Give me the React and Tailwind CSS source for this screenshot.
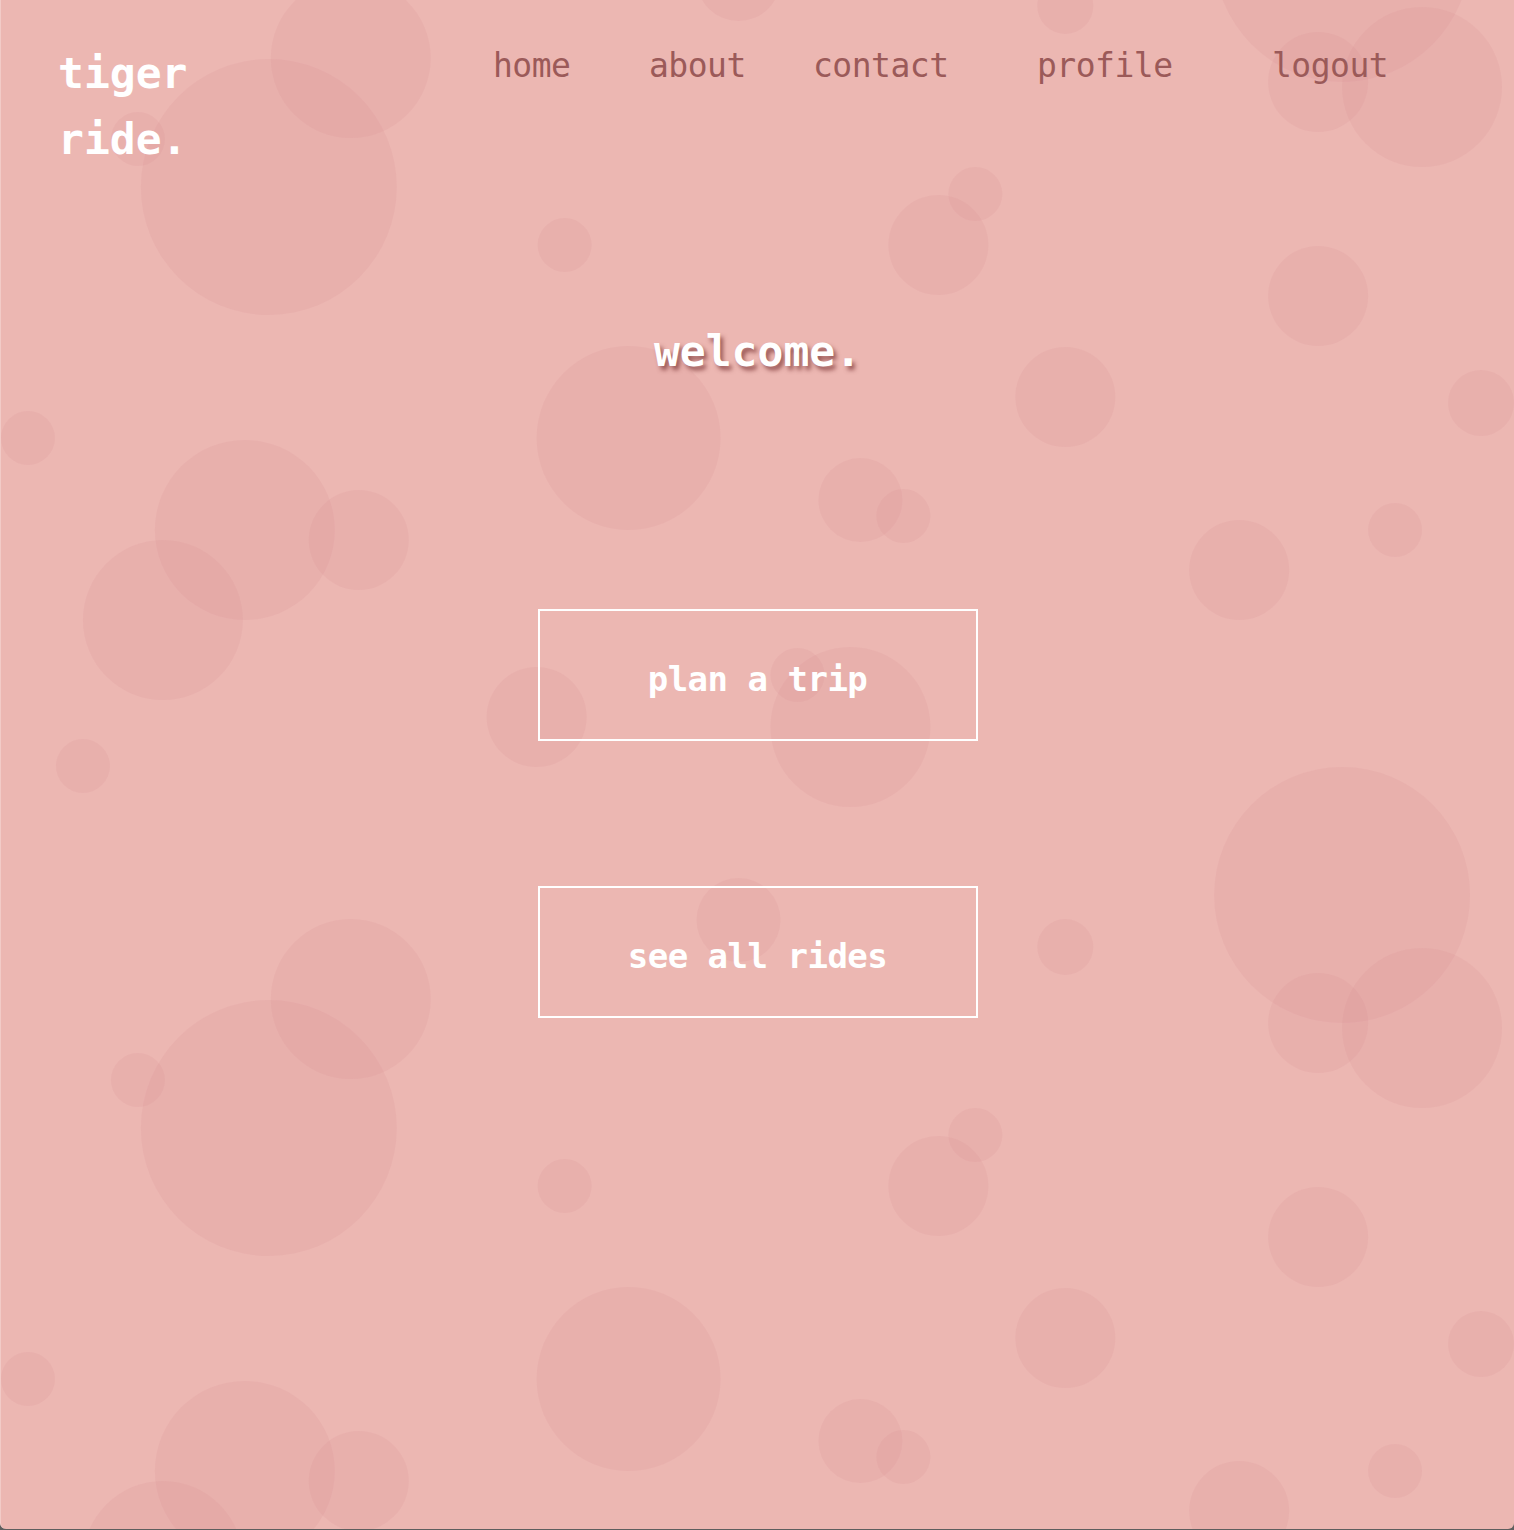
const circles = [
  [268, 187, 128], [350, 58, 80], [738, -21, 42], [1065, 6, 28], [1342, -46, 128],
  [1318, 82, 50], [1422, 87, 80], [975, 194, 27], [938, 245, 50], [564, 245, 27],
  [1318, 296, 50], [628, 438, 92], [1065, 397, 50], [1481, 403, 33], [27, 438, 27],
  [244, 530, 90], [358, 540, 50], [162, 620, 80], [860, 500, 42], [903, 516, 27],
  [1239, 570, 50], [1395, 530, 27], [536, 717, 50], [850, 727, 80], [797, 675, 27],
  [82, 766, 27], [137, 139, 27],
];

const navLinks = [
  { label: 'home', w: 'w-[156px]' },
  { label: 'about', w: 'w-[164px]' },
  { label: 'contact', w: 'w-[224px]' },
  { label: 'profile', w: 'w-[235px]' },
  { label: 'logout', w: 'w-[150px]' },
];

const Bubbles = () => (
  <svg className="absolute inset-0 w-full h-full" viewBox="0 0 1514 1529" preserveAspectRatio="none">
    {[0, 1, 2].map((k) =>
      circles.map(([cx, cy, r], i) => (
        <circle key={`${k}-${i}`} cx={cx} cy={cy + k * 941} r={r} fill="#d4898b" fillOpacity="0.14" />
      ))
    )}
  </svg>
);

const App = () => {
  return (
    <div className="bg-[#5e5e5e] h-[1530px] font-['DejaVu_Sans_Mono',monospace]">
      <div className="relative h-[1529px] overflow-hidden rounded-b-[6px] bg-[#ecb7b2] border-l border-[#f2cbc7]">
        <Bubbles />
        <div className="relative">
          <header className="flex items-start pt-[40px] pl-[57px]">
            <div className="w-[435px] text-white font-bold text-[43px] leading-[66px]">
              tiger
              <br />
              ride.
            </div>
            <nav className="flex mt-[6px]">
              {navLinks.map((link) => (
                <a key={link.label} className={`${link.w} text-[33px] leading-[40px] text-[#9b5a59] tracking-[-0.5px]`}>
                  {link.label}
                </a>
              ))}
            </nav>
          </header>

          <h1 className="mt-[154px] text-center text-white font-bold text-[43px] leading-[50px] [text-shadow:3px_4px_4px_rgba(130,60,60,0.75)]">
            welcome.
          </h1>

          <div className="flex flex-col items-center gap-[145px] mt-[233px]">
            <button className="w-[440px] h-[132px] border-2 border-white flex items-center justify-center pt-[8px] text-white font-bold text-[34px] tracking-[-0.5px]">
              plan a trip
            </button>
            <button className="w-[440px] h-[132px] border-2 border-white flex items-center justify-center pt-[8px] text-white font-bold text-[34px] tracking-[-0.5px]">
              see all rides
            </button>
          </div>
        </div>
      </div>
    </div>
  );
};

export default App;
